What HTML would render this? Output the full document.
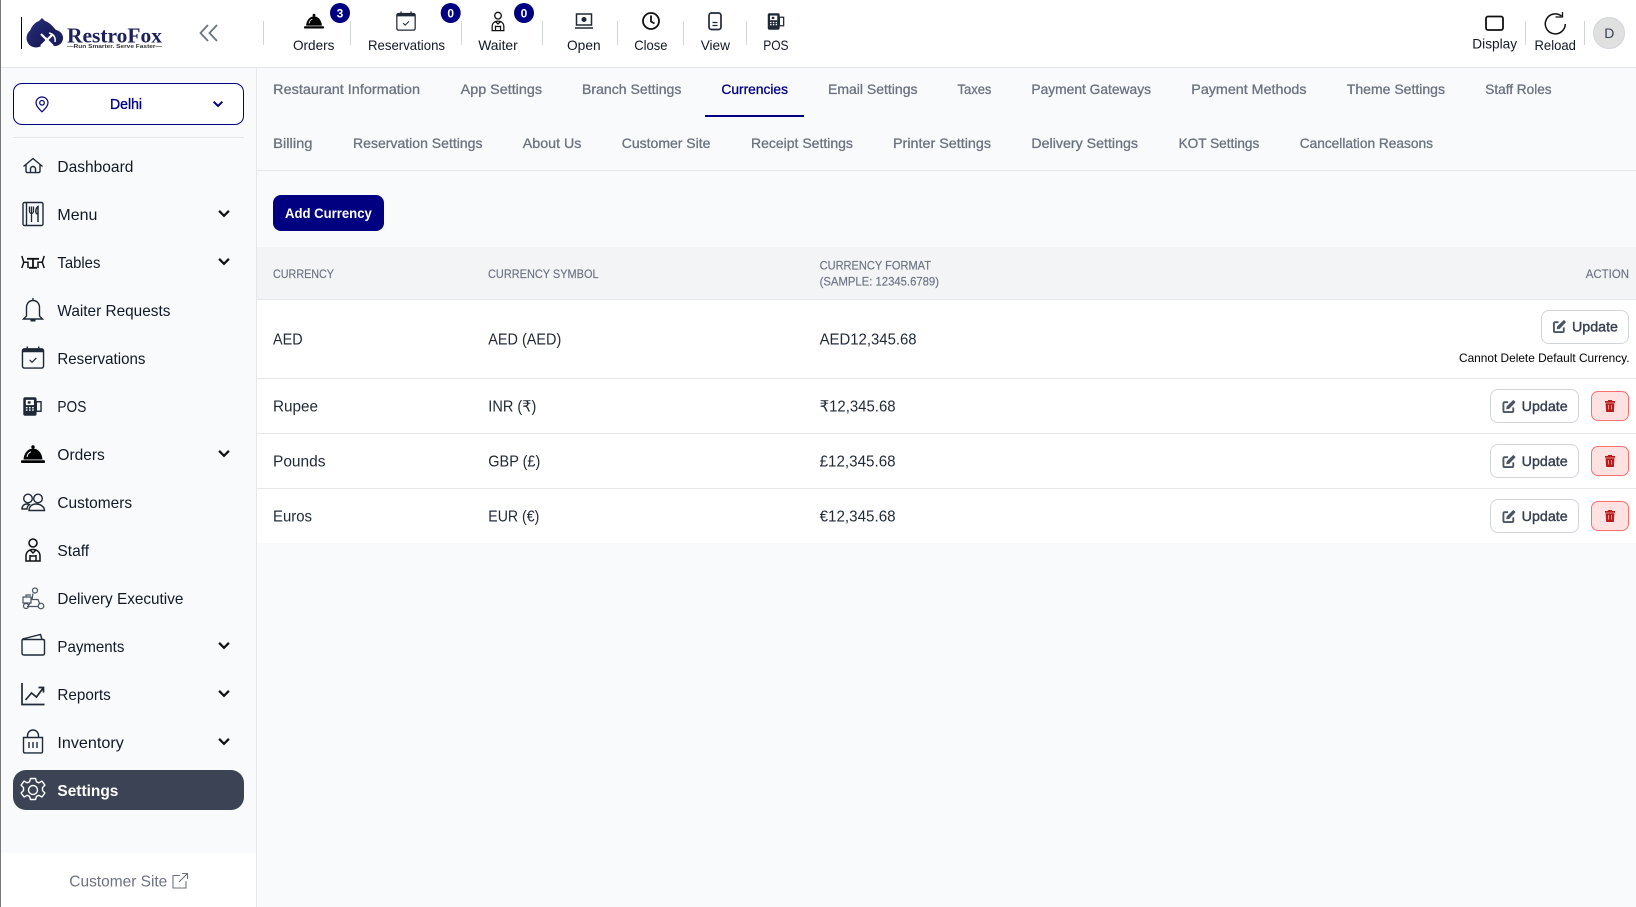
<!DOCTYPE html>
<html lang="en"><head><meta charset="utf-8"><title>RestroFox - Currencies</title>
<style>
html,body{margin:0;padding:0;background:#f9fafb;width:1636px;height:907px;overflow:hidden;font-family:"Liberation Sans",sans-serif}
.b{position:absolute;box-sizing:border-box}
svg.o{position:absolute;left:0;top:0;color:#111}
text{font-family:"Liberation Sans","DejaVu Sans",sans-serif}
.nav text{font-size:16px;fill:#111827}
.tool text{font-size:14px;fill:#111827}
.tab text{font-size:14px;fill:#6b7280;stroke:#6b7280;stroke-width:.3}
.th text{font-size:12px;fill:#6b7280;stroke:#6b7280;stroke-width:.15}
.td text{font-size:15.5px;fill:#1f2937}
.up text{font-size:14px;fill:#374151;stroke:#374151;stroke-width:.4}
</style></head><body>
<div class="b" style="left:0;top:0;width:1636px;height:67px;background:#fff"></div>
<div class="b" style="left:0;top:67px;width:1636px;height:1px;background:#e5e7eb"></div>
<div class="b" style="left:256px;top:68px;width:1px;height:839px;background:#e5e7eb"></div>
<div class="b" style="left:1px;top:853px;width:255px;height:54px;background:#fff"></div>
<div class="b" style="left:0;top:0;width:1px;height:907px;background:#777"></div>
<div class="b" style="left:13px;top:83px;width:231px;height:42px;border:1px solid #000080;border-radius:9px;background:#fff"></div>
<div class="b" style="left:13px;top:137px;width:231px;height:1px;background:#e5e7eb"></div>
<div class="b" style="left:13px;top:770px;width:231px;height:40px;border-radius:13px;background:#3b4354"></div>
<div class="b" style="left:257px;top:170px;width:1379px;height:1px;background:#e5e7eb"></div>
<div class="b" style="left:705px;top:115px;width:99px;height:2px;background:#000080"></div>
<div class="b" style="left:273px;top:195px;width:111px;height:36px;border-radius:8px;background:#000080"></div>
<div class="b" style="left:257px;top:247px;width:1379px;height:52px;background:#f3f4f6"></div>
<div class="b" style="left:257px;top:299px;width:1379px;height:244px;background:#fff"></div>
<div class="b" style="left:257px;top:299px;width:1379px;height:1px;background:#e5e7eb"></div>
<div class="b" style="left:257px;top:378px;width:1379px;height:1px;background:#e5e7eb"></div>
<div class="b" style="left:257px;top:433px;width:1379px;height:1px;background:#e5e7eb"></div>
<div class="b" style="left:257px;top:488px;width:1379px;height:1px;background:#e5e7eb"></div>
<div class="b" style="left:1541px;top:310px;width:88px;height:34px;border:1px solid #d1d5db;border-radius:8px;background:#fff"></div>
<div class="b" style="left:1490px;top:389px;width:89px;height:34px;border:1px solid #d1d5db;border-radius:8px;background:#fff"></div>
<div class="b" style="left:1490px;top:444px;width:89px;height:34px;border:1px solid #d1d5db;border-radius:8px;background:#fff"></div>
<div class="b" style="left:1490px;top:499px;width:89px;height:34px;border:1px solid #d1d5db;border-radius:8px;background:#fff"></div>
<div class="b" style="left:1591px;top:391px;width:38px;height:30px;border:1px solid #f87171;border-radius:7px;background:#fee2e2"></div>
<div class="b" style="left:1591px;top:446px;width:38px;height:30px;border:1px solid #f87171;border-radius:7px;background:#fee2e2"></div>
<div class="b" style="left:1591px;top:501px;width:38px;height:30px;border:1px solid #f87171;border-radius:7px;background:#fee2e2"></div>
<div class="b" style="left:1593px;top:17px;width:32px;height:32px;border:1px solid #d1d5db;border-radius:50%;background:#e0e0e0"></div>

<svg class="o" width="1636" height="907" viewBox="0 0 1636 907" xmlns="http://www.w3.org/2000/svg">
<defs>
<linearGradient id="lg" x1="0" y1="0" x2="1" y2="1"><stop offset="0" stop-color="#27307c"/><stop offset="1" stop-color="#14144e"/></linearGradient>
<symbol id="dome" viewBox="0 0 24 18"><circle cx="12" cy="2" r="1.7" fill="#000"/><path d="M2.500 14.500C3 8 7 3.500 12 3.500s9 4.500 9.500 11z" fill="#000"/><rect x="0" y="15.300" width="24" height="2.700" rx="1" fill="#000"/><path d="M6 12c.4-2.500 2-4.500 4-5.300" stroke="#fff" stroke-width="1" fill="none"/></symbol>
<symbol id="cal" viewBox="0 0 24 24"><rect x="1" y="3" width="22" height="20" rx="2" fill="none" stroke="#1f2937" stroke-width="1.500"/><path d="M1 3.500h22v3H1z" fill="#1f2937"/><path d="M6 .5v3M18 .5v3" stroke="#1f2937" stroke-width="1.500"/><path d="M8.500 14.500l2.500 2.500 4.500-4.500" fill="none" stroke="#1f2937" stroke-width="1.300"/></symbol>
<symbol id="staff" viewBox="0 0 16 24"><circle cx="8" cy="5" r="4" fill="none" stroke="#111" stroke-width="1.600"/><path d="M1 23v-5c0-4 3-6.500 7-6.500s7 2.500 7 6.500v5zM5 12l3 3 3-3M5 23v-6M11 23v-6M5 18h6" fill="none" stroke="#111" stroke-width="1.500"/></symbol>
<symbol id="pos" viewBox="0 0 20 20"><rect x=".8" y=".8" width="13" height="18.400" rx="1.500" fill="#1f2937" stroke="#1f2937"/><rect x="3" y="3" width="8.500" height="5.500" fill="#fff"/><rect x="5" y="4.500" width="3" height="2.500" fill="#1f2937"/><g fill="#fff"><rect x="3" y="10.500" width="1.700" height="1.500"/><rect x="6.300" y="10.500" width="1.700" height="1.500"/><rect x="9.600" y="10.500" width="1.700" height="1.500"/><rect x="3" y="13" width="1.700" height="1.500"/><rect x="6.300" y="13" width="1.700" height="1.500"/><rect x="9.600" y="13" width="1.700" height="1.500"/></g><rect x="14" y="5" width="5" height="10" fill="none" stroke="#1f2937" stroke-width="1.500"/></symbol>
<symbol id="chev" viewBox="0 0 14 10"><path d="M1.500 2l5.500 5.500L12.500 2" fill="none" stroke="currentColor" stroke-width="2.500"/></symbol>
<symbol id="edit" viewBox="0 0 14 14"><path d="M6 2.400H2.200C1.500 2.400 1 3 1 3.600v8.200c0 .7.500 1.200 1.200 1.200h8.200c.7 0 1.200-.5 1.200-1.200V8" fill="none" stroke="#4b5563" stroke-width="2"/><path d="M4 10l.5-3.200L11 .5c.5-.5 1-.5 1.500 0l1 1c.5.500.5 1 0 1.500l-6.300 6.500z" fill="#4b5563"/></symbol>
<symbol id="trash" viewBox="0 0 10 12"><path d="M3.200 0h3.600l.5 1H10v1.700H0V1h2.700zM.6 3.200h8.800l-.5 8c0 .5-.4.8-.8.800H1.900c-.4 0-.8-.3-.8-.8z" fill="#b91c1c"/><path d="M3.500 5v4.500M6.500 5v4.500" stroke="#fee2e2" stroke-width=".6"/></symbol>
</defs>

<!-- Logo -->
<rect x="21" y="17" width="1" height="32" fill="#000"/>
<g fill="url(#lg)">
<circle cx="36" cy="38" r="9.500"/><circle cx="55" cy="38" r="8"/>
<path d="M30 31c2-6 6-9 9-10l3-3 3 3c3 1 6 3 10 8l4 4-8 1-6 5-12 0z"/>
</g>
<path d="M41 34l12 12M53 34L41 46" stroke="#fff" stroke-width="2.200"/>
<path d="M49 33c4 1 7 4 6 9" fill="none" stroke="#fff" stroke-width="1.500"/>
<text x="67" y="42.500" textLength="95" lengthAdjust="spacingAndGlyphs" style="font-family:'Liberation Serif',serif;font-weight:700;font-size:21px;fill:#1c1f5e">RestroFox</text>
<text x="67" y="47.800" textLength="95" lengthAdjust="spacingAndGlyphs" style="font-size:5.500px;font-weight:700;fill:#333">—Run Smarter. Serve Faster—</text>
<path d="M208 25l-7.500 8 7.500 8M217 25l-7.500 8 7.500 8" fill="none" stroke="#6b7280" stroke-width="1.800"/>

<!-- Toolbar -->
<g fill="#d1d5db"><rect x="263" y="21" width="1" height="24"/><rect x="350" y="21" width="1" height="24"/><rect x="461" y="21" width="1" height="24"/><rect x="542" y="21" width="1" height="24"/><rect x="617" y="21" width="1" height="24"/><rect x="683" y="21" width="1" height="24"/><rect x="746" y="21" width="1" height="24"/><rect x="1525" y="21" width="1" height="24"/><rect x="1584" y="21" width="1" height="24"/></g>
<use href="#dome" x="304" y="13.500" width="20" height="15"/>
<use href="#cal" x="396" y="11" width="20" height="20"/>
<use href="#staff" x="491" y="11.500" width="14" height="20"/>
<g fill="none" stroke="#1f2937" stroke-width="1.500"><rect x="576.500" y="14" width="15" height="11"/><path d="M575 28h18"/><circle cx="584" cy="19.500" r="1.800" fill="#1f2937"/></g>
<circle cx="651" cy="21" r="8" fill="none" stroke="#111" stroke-width="1.800"/><path d="M651 15.500V21.500l3.500 2" fill="none" stroke="#111" stroke-width="1.800"/>
<rect x="709" y="13" width="12" height="16.500" rx="2.500" fill="none" stroke="#1f2937" stroke-width="1.700"/><path d="M712.500 22.500h5M712.500 25.500h5" stroke="#1f2937" stroke-width="1.300"/>
<use href="#pos" x="767.500" y="13" width="17" height="17"/>
<rect x="1486" y="16.500" width="17" height="13.500" rx="2" fill="none" stroke="#111" stroke-width="1.800"/>
<path d="M1561.500 16a10 10 0 1 0 3.800 8" fill="none" stroke="#111" stroke-width="1.500"/><path d="M1555.500 17h7v-5" fill="none" stroke="#111" stroke-width="1.300"/>
<g class="tool">
<text x="293" y="50" textLength="41.400" lengthAdjust="spacingAndGlyphs">Orders</text>
<text x="368" y="50" textLength="77" lengthAdjust="spacingAndGlyphs">Reservations</text>
<text x="478.200" y="50" textLength="39.600" lengthAdjust="spacingAndGlyphs">Waiter</text>
<text x="567" y="50" textLength="33.600" lengthAdjust="spacingAndGlyphs">Open</text>
<text x="634.300" y="50" textLength="33.200" lengthAdjust="spacingAndGlyphs">Close</text>
<text x="700.700" y="50" textLength="29.300" lengthAdjust="spacingAndGlyphs">View</text>
<text x="763.200" y="50" textLength="25.400" lengthAdjust="spacingAndGlyphs">POS</text>
<text x="1472.300" y="48.300" textLength="44.800" lengthAdjust="spacingAndGlyphs">Display</text>
<text x="1534.500" y="50" textLength="41.400" lengthAdjust="spacingAndGlyphs">Reload</text>
<text x="1604.200" y="38" style="fill:#374151">D</text>
</g>
<g fill="#000080"><circle cx="340" cy="13" r="10"/><circle cx="450.700" cy="13" r="10"/><circle cx="524" cy="13" r="10"/></g>
<g style="font-size:12px;font-weight:700" fill="#fff" text-anchor="middle"><text x="340" y="17.300">3</text><text x="450.700" y="17.300">0</text><text x="524" y="17.300">0</text></g>

<!-- Location -->
<path d="M42 97c-3.500 0-6 2.700-6 5.800 0 3.700 4 7.200 6 9 2-1.800 6-5.300 6-9 0-3.100-2.500-5.800-6-5.800z" fill="none" stroke="#000080" stroke-width="1.200"/><circle cx="42" cy="102.800" r="2.300" fill="none" stroke="#000080" stroke-width="1.200"/>
<text x="110" y="109" textLength="32" lengthAdjust="spacingAndGlyphs" style="font-size:14.500px;fill:#000080;stroke:#000080;stroke-width:.35">Delhi</text>
<use href="#chev" x="212.500" y="100" width="11" height="8" style="color:#000080"/>

<!-- Sidebar icons -->
<g fill="none" stroke="#1f2937" stroke-width="1.400">
<path d="M23.500 166.500L33 158.500l9.500 8M26 164.500v6.500c0 1 .6 1.600 1.500 1.600h11c.9 0 1.500-.6 1.500-1.600v-6.500M30.500 172.500v-3.500a2.500 2.500 0 0 1 5 0v3.500"/>
<rect x="23" y="202.500" width="20" height="23" rx="1.500"/><path d="M26.500 202.500v23"/>
<path d="M29.500 206.500v4.500c0 1.500 1 2.500 2 2.500s2-1 2-2.500v-4.500M31.500 206.500v15.500" stroke-width="1.300"/><path d="M38 222v-15.500c-1.500 1-2.200 3-2.200 5 0 1.500 1 2.500 2.200 2.500" stroke-width="1.500"/>
<path d="M27 258.800h12M33 258.800v9M29 267.800h8" stroke-width="1.800" stroke="#111"/>
<path d="M21.800 256l2 6.200-2 5.800M23.800 262.200h4.200l0 5.800M44.200 256l-2 6.200 2 5.800M42.200 262.200H38v5.800" stroke-width="1.500" stroke="#111"/>
<path d="M33 298v2.500M26.500 316v-8.500c0-4 2.700-7 6.500-7s6.500 3 6.500 7v8.500l3 3h-19z"/><path d="M30.500 320.500h5" stroke-width="2"/>
<path d="M22 509c0-3 2-5 5-5 1 0 1.700.2 2.500.6-1.500 1-2.500 3-2.500 4.400zM29 510.500c0-4 3-6.500 7-6.500s8.500 2.500 8.500 6.500z"/><circle cx="28" cy="498.500" r="4.300"/><circle cx="38" cy="498.500" r="4.300"/>
<path d="M22 640l0 13c0 1.200.8 2 2 2h19c1 0 1.500-.8 1.500-2v-12c0-1-.5-1.500-1.500-1.500H22.500zM22.500 639c6-1.500 12-3 18-4.500l1.500 5"/>
<path d="M22 683v21.500h22.500" stroke-width="1.700"/><path d="M25.500 700l6-7 5 4 7-9.500M38.500 687.500h5v5" stroke-width="1.700"/>
<path d="M23.500 737.500h19v14c0 .8-.6 1.400-1.400 1.400H24.900c-.8 0-1.400-.6-1.400-1.400zM27.500 737.500v-2a5.500 5.500 0 0 1 11 0v2M29 742v6M33 742v6M37 742v6"/>
</g>
<use href="#cal" x="21.500" y="346" width="23" height="23"/>
<use href="#pos" x="22.500" y="397" width="20" height="19"/>
<use href="#dome" x="21" y="445" width="24" height="18"/>
<use href="#staff" x="25" y="538" width="16" height="24"/>
<g fill="none" stroke="#4b5563" stroke-width="1.200"><circle cx="35" cy="590.500" r="2.500"/><path d="M33 593.500l-1 6h6l2 5M23 597h8v6h-8zM26 597v-2h5M27 606.500h11M30 603l-2 3.500"/><circle cx="26" cy="606" r="2.500"/><circle cx="41" cy="606" r="2.800"/></g>
<g fill="none" stroke="#fff" stroke-width="1.400"><circle cx="33" cy="790" r="4.500"/><path d="M30.500 778.500h5l1 3.300 2.400 1 3-1.700 3 4-2.400 2.500v2.900l2.400 2.500-3 4-3-1.700-2.400 1-1 3.200h-5l-1-3.200-2.400-1-3 1.700-3-4 2.400-2.500v-2.900l-2.400-2.500 3-4 3 1.700 2.400-1z" stroke-linejoin="round"/></g>
<use href="#chev" x="217.500" y="209" width="13" height="9"/><use href="#chev" x="217.500" y="257" width="13" height="9"/><use href="#chev" x="217.500" y="449" width="13" height="9"/><use href="#chev" x="217.500" y="641" width="13" height="9"/><use href="#chev" x="217.500" y="689" width="13" height="9"/><use href="#chev" x="217.500" y="737" width="13" height="9"/>

<g class="nav">
<text x="57.400" y="171.800" textLength="76" lengthAdjust="spacingAndGlyphs">Dashboard</text>
<text x="57.400" y="219.800" textLength="40" lengthAdjust="spacingAndGlyphs">Menu</text>
<text x="57.400" y="267.800" textLength="43" lengthAdjust="spacingAndGlyphs">Tables</text>
<text x="57.400" y="315.800" textLength="113" lengthAdjust="spacingAndGlyphs">Waiter Requests</text>
<text x="57.400" y="363.800" textLength="88" lengthAdjust="spacingAndGlyphs">Reservations</text>
<text x="57.400" y="411.800" textLength="29" lengthAdjust="spacingAndGlyphs">POS</text>
<text x="57.400" y="459.800" textLength="47.400" lengthAdjust="spacingAndGlyphs">Orders</text>
<text x="57.400" y="507.800" textLength="74.700" lengthAdjust="spacingAndGlyphs">Customers</text>
<text x="57.400" y="555.800" textLength="31.700" lengthAdjust="spacingAndGlyphs">Staff</text>
<text x="57.400" y="603.800" textLength="126" lengthAdjust="spacingAndGlyphs">Delivery Executive</text>
<text x="57.400" y="651.800" textLength="67" lengthAdjust="spacingAndGlyphs">Payments</text>
<text x="57.400" y="699.800" textLength="53.400" lengthAdjust="spacingAndGlyphs">Reports</text>
<text x="57.400" y="747.800" textLength="66.400" lengthAdjust="spacingAndGlyphs">Inventory</text>
<text x="57.400" y="795.800" textLength="61" lengthAdjust="spacingAndGlyphs" style="fill:#fff;font-weight:700">Settings</text>
<text x="69.300" y="886.500" textLength="98" lengthAdjust="spacingAndGlyphs" style="fill:#6b7280">Customer Site</text>
</g>
<path d="M180 875.500h-7v12.500h13v-7M179 882l8.500-8.500M182 873.500h5.500v5.500" fill="none" stroke="#6b7280" stroke-width="1.100"/>

<!-- Tabs -->
<g class="tab">
<text x="273.200" y="94" textLength="146.800" lengthAdjust="spacingAndGlyphs">Restaurant Information</text>
<text x="460.700" y="94" textLength="81.300" lengthAdjust="spacingAndGlyphs">App Settings</text>
<text x="582" y="94" textLength="99.400" lengthAdjust="spacingAndGlyphs">Branch Settings</text>
<text x="721.400" y="94" textLength="66.600" lengthAdjust="spacingAndGlyphs" style="fill:#000080;stroke:#000080">Currencies</text>
<text x="828" y="94" textLength="89.500" lengthAdjust="spacingAndGlyphs">Email Settings</text>
<text x="957.500" y="94" textLength="33.900" lengthAdjust="spacingAndGlyphs">Taxes</text>
<text x="1031.400" y="94" textLength="119.600" lengthAdjust="spacingAndGlyphs">Payment Gateways</text>
<text x="1191.300" y="94" textLength="115.200" lengthAdjust="spacingAndGlyphs">Payment Methods</text>
<text x="1346.800" y="94" textLength="98.200" lengthAdjust="spacingAndGlyphs">Theme Settings</text>
<text x="1485.300" y="94" textLength="66.300" lengthAdjust="spacingAndGlyphs">Staff Roles</text>
<text x="273.200" y="148" textLength="39.300" lengthAdjust="spacingAndGlyphs">Billing</text>
<text x="353" y="148" textLength="129.500" lengthAdjust="spacingAndGlyphs">Reservation Settings</text>
<text x="522.800" y="148" textLength="58.600" lengthAdjust="spacingAndGlyphs">About Us</text>
<text x="621.800" y="148" textLength="88.600" lengthAdjust="spacingAndGlyphs">Customer Site</text>
<text x="751" y="148" textLength="101.900" lengthAdjust="spacingAndGlyphs">Receipt Settings</text>
<text x="893" y="148" textLength="98" lengthAdjust="spacingAndGlyphs">Printer Settings</text>
<text x="1031.400" y="148" textLength="106.600" lengthAdjust="spacingAndGlyphs">Delivery Settings</text>
<text x="1178.600" y="148" textLength="80.700" lengthAdjust="spacingAndGlyphs">KOT Settings</text>
<text x="1299.700" y="148" textLength="133.300" lengthAdjust="spacingAndGlyphs">Cancellation Reasons</text>
</g>
<text x="285" y="218" textLength="86.800" lengthAdjust="spacingAndGlyphs" style="font-size:14px;font-weight:700;fill:#fff">Add Currency</text>

<!-- Table -->
<g class="th">
<text x="273" y="278" textLength="61" lengthAdjust="spacingAndGlyphs">CURRENCY</text>
<text x="488" y="278" textLength="110.600" lengthAdjust="spacingAndGlyphs">CURRENCY SYMBOL</text>
<text x="819.600" y="269.700" textLength="111.400" lengthAdjust="spacingAndGlyphs">CURRENCY FORMAT</text>
<text x="819.600" y="285.700" textLength="119.400" lengthAdjust="spacingAndGlyphs">(SAMPLE: 12345.6789)</text>
<text x="1585.800" y="278" textLength="43.200" lengthAdjust="spacingAndGlyphs">ACTION</text>
</g>
<g class="td">
<text x="273" y="344.700" textLength="29.600" lengthAdjust="spacingAndGlyphs">AED</text>
<text x="488.300" y="344.700" textLength="73" lengthAdjust="spacingAndGlyphs">AED (AED)</text>
<text x="819.600" y="344.700" textLength="97" lengthAdjust="spacingAndGlyphs">AED12,345.68</text>
<text x="273" y="411.500" textLength="45" lengthAdjust="spacingAndGlyphs">Rupee</text>
<text x="488.300" y="411.500" textLength="48" lengthAdjust="spacingAndGlyphs">INR (₹)</text>
<text x="819.600" y="411.500" textLength="76" lengthAdjust="spacingAndGlyphs">₹12,345.68</text>
<text x="273" y="466.500" textLength="52.500" lengthAdjust="spacingAndGlyphs">Pounds</text>
<text x="488.300" y="466.500" textLength="52" lengthAdjust="spacingAndGlyphs">GBP (£)</text>
<text x="819.600" y="466.500" textLength="76" lengthAdjust="spacingAndGlyphs">£12,345.68</text>
<text x="273" y="521.500" textLength="39" lengthAdjust="spacingAndGlyphs">Euros</text>
<text x="488.300" y="521.500" textLength="51" lengthAdjust="spacingAndGlyphs">EUR (€)</text>
<text x="819.600" y="521.500" textLength="76" lengthAdjust="spacingAndGlyphs">€12,345.68</text>
</g>
<g class="up">
<text x="1572" y="331.700" textLength="46" lengthAdjust="spacingAndGlyphs">Update</text>
<text x="1521.700" y="411" textLength="46" lengthAdjust="spacingAndGlyphs">Update</text>
<text x="1521.700" y="466" textLength="46" lengthAdjust="spacingAndGlyphs">Update</text>
<text x="1521.700" y="521" textLength="46" lengthAdjust="spacingAndGlyphs">Update</text>
</g>
<text x="1459" y="361.800" textLength="170.500" lengthAdjust="spacingAndGlyphs" style="font-size:12px;fill:#000">Cannot Delete Default Currency.</text>
<use href="#edit" x="1553" y="320" width="13" height="13"/>
<use href="#edit" x="1502.500" y="400" width="13" height="13"/>
<use href="#edit" x="1502.500" y="455" width="13" height="13"/>
<use href="#edit" x="1502.500" y="510" width="13" height="13"/>
<use href="#trash" x="1605" y="400" width="10" height="12"/>
<use href="#trash" x="1605" y="455" width="10" height="12"/>
<use href="#trash" x="1605" y="510" width="10" height="12"/>
</svg>
</body></html>
